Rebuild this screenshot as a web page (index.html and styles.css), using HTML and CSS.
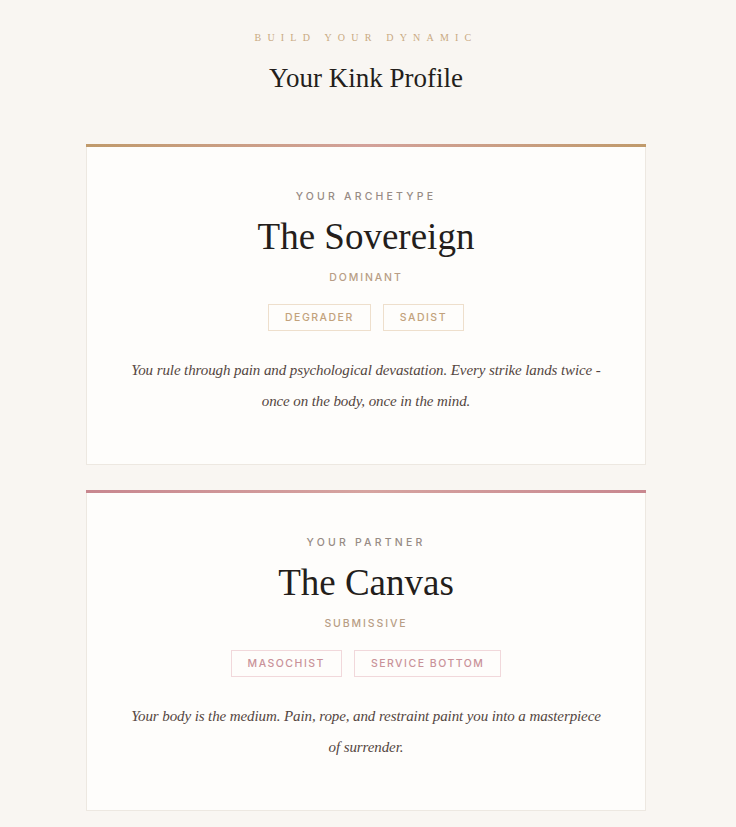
FILE: index.html
```html
<!DOCTYPE html>
<html lang="en">
<head>
<meta charset="utf-8">
<title>Your Kink Profile</title>
<link rel="stylesheet" href="styles.css">
</head>
<body>
<main class="page">
  <header class="intro">
    <p class="eyebrow">Build Your Dynamic</p>
    <h1 class="page-title">Your Kink Profile</h1>
  </header>

  <section class="card card-gold">
    <p class="card-label">Your Archetype</p>
    <h2 class="card-title">The Sovereign</h2>
    <p class="role">Dominant</p>
    <div class="tags">
      <span class="tag tag-gold">Degrader</span>
      <span class="tag tag-gold">Sadist</span>
    </div>
    <p class="desc">You rule through pain and psychological devastation. Every strike lands twice - once on the body, once in the mind.</p>
  </section>

  <section class="card card-rose">
    <p class="card-label">Your Partner</p>
    <h2 class="card-title">The Canvas</h2>
    <p class="role">Submissive</p>
    <div class="tags">
      <span class="tag tag-rose">Masochist</span>
      <span class="tag tag-rose">Service Bottom</span>
    </div>
    <p class="desc">Your body is the medium. Pain, rope, and restraint paint you into a masterpiece of surrender.</p>
  </section>
</main>
</body>
</html>
```

FILE: styles.css
```css
* { box-sizing: border-box; }

html, body {
  margin: 0;
  padding: 0;
  background: #f9f6f2;
}

body {
  font-family: "Liberation Serif", "Times New Roman", serif;
  color: #2a2421;
}

.page {
  width: 560px;
  margin: 0 auto;
  position: relative;
  left: -2px;
  padding: 30px 0 40px;
  display: flex;
  flex-direction: column;
  gap: 25px;
}

.intro {
  text-align: center;
  padding-bottom: 23px;
}

.eyebrow {
  margin: 0;
  font-family: "Liberation Serif", serif;
  font-size: 10px;
  line-height: 16px;
  letter-spacing: 6.2px;
  text-transform: uppercase;
  color: #c9aa82;
}

.page-title {
  margin: 14px 0 0;
  font-weight: 400;
  font-size: 27px;
  line-height: 36px;
  color: #241e1b;
}

.card {
  position: relative;
  background: #fefdfb;
  border: 1px solid #ede8e1;
  padding: 44px 40px 47px;
  text-align: center;
}

.card::before {
  content: "";
  position: absolute;
  top: -1px;
  left: -1px;
  right: -1px;
  height: 3px;
}

.card-gold::before {
  background: linear-gradient(90deg, #c09a6b 0%, #d3a19a 50%, #c09a6b 100%);
}

.card-rose::before {
  background: linear-gradient(90deg, #c8878f 0%, #d6a4a0 50%, #c8878f 100%);
}

.card-label {
  margin: 0;
  font-family: Inter, "Liberation Sans", sans-serif;
  font-size: 10.5px;
  font-weight: 500;
  line-height: 16px;
  letter-spacing: 3.2px;
  text-transform: uppercase;
  color: #978b84;
}

.card-title {
  margin: 10px 0 0;
  font-weight: 400;
  font-size: 37px;
  line-height: 44px;
  color: #241e1b;
}

.role {
  margin: 11px 0 0;
  font-family: Inter, "Liberation Sans", sans-serif;
  font-size: 10.5px;
  font-weight: 500;
  line-height: 16px;
  letter-spacing: 1.9px;
  text-transform: uppercase;
  color: #b89e85;
}

.tags {
  margin-top: 18px;
  display: flex;
  justify-content: center;
  gap: 12px;
}

.tag {
  display: inline-block;
  height: 27px;
  line-height: 25px;
  padding: 0 16px;
  font-family: Inter, "Liberation Sans", sans-serif;
  font-size: 10.5px;
  font-weight: 500;
  letter-spacing: 1.5px;
  text-transform: uppercase;
}

.tag-gold {
  color: #c2a27c;
  border: 1px solid #eedfcc;
}

.tag-rose {
  color: #c99299;
  border: 1px solid #f1d8db;
}

.desc {
  margin: 24px auto 0;
  max-width: 480px;
  font-style: italic;
  font-size: 15px;
  letter-spacing: -0.1px;
  line-height: 31px;
  color: #54463f;
}
```
